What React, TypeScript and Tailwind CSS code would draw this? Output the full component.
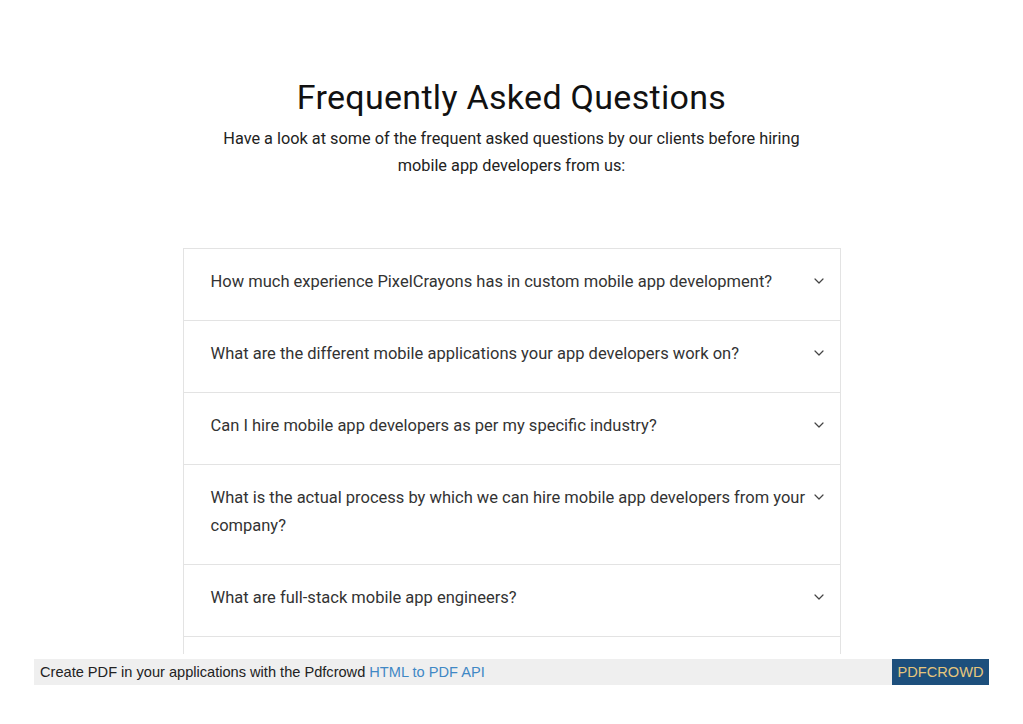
import React from "react";

const questions = [
  "How much experience PixelCrayons has in custom mobile app development?",
  "What are the different mobile applications your app developers work on?",
  "Can I hire mobile app developers as per my specific industry?",
  "What is the actual process by which we can hire mobile app developers from your company?",
  "What are full-stack mobile app engineers?",
];

function Chevron() {
  return (
    <svg width="10" height="6" viewBox="0 0 10 6" fill="none" className="mt-[10px] shrink-0">
      <path d="M1 1l4 4 4-4" stroke="#444" strokeWidth="1.2" strokeLinecap="round" strokeLinejoin="round" />
    </svg>
  );
}

export default function App() {
  return (
    <div className="w-[1023px] h-[724px] bg-white overflow-hidden relative" style={{ fontFamily: "Roboto, 'Noto Sans', sans-serif" }}>
      <div className="h-[654px] overflow-hidden">
        <div className="pt-[75px] flex flex-col items-center">
          <h1 className="text-[34px] leading-[44px] text-[#111] font-normal tracking-[0.3px]">Frequently Asked Questions</h1>
          <p className="mt-[6px] text-[16.3px] leading-[27px] text-[#222] text-center w-[600px]">
            Have a look at some of the frequent asked questions by our clients before hiring mobile app developers from us:
          </p>
        </div>
        <div className="mt-[69px] mx-auto w-[658px] border border-[#e3e3e3]">
          {questions.map((q, i) => (
            <div key={i} className={`flex justify-between gap-[6px] pl-[27px] pr-[16px] pt-[19px] pb-[24px] ${i > 0 ? "border-t border-[#e3e3e3]" : ""}`}>
              <span className="text-[16.5px] leading-[28px] text-[#333]">{q}</span>
              <Chevron />
            </div>
          ))}
          <div className="h-[71px] border-t border-[#e3e3e3]" />
        </div>
      </div>
      <div className="absolute left-[34px] top-[659px] w-[955px] h-[26px] bg-[#efefef] flex items-center justify-between" style={{ fontFamily: "'Liberation Sans', Arial, sans-serif" }}>
        <div className="pl-[6px] flex items-center text-[14.6px] leading-[20px] whitespace-nowrap">
          <span className="text-[#222]">Create PDF in your applications with the Pdfcrowd</span>
          <span className="ml-[4px] text-[#3f88c5]">HTML to PDF API</span>
        </div>
        <span className="h-[26px] w-[97px] flex items-center justify-center bg-[#1d4f7c] text-[#e6c67c] text-[14.6px] leading-[20px]">PDFCROWD</span>
      </div>
    </div>
  );
}
